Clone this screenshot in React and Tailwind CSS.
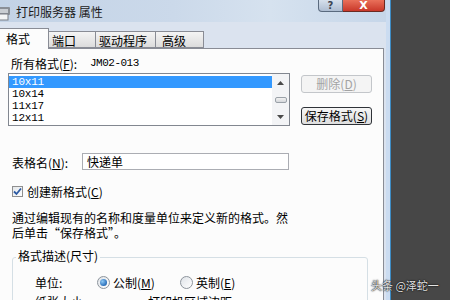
import React from "react";

const cjk = "font-['Noto_Sans_CJK_SC','Noto_Sans_CJK_JP',sans-serif]";

function Key({ k }) {
  return (
    <>
      (<span className="underline">{k}</span>)
    </>
  );
}

function Radio({ checked }) {
  return (
    <span className="w-[13px] h-[13px] rounded-full border border-[#8d949c] bg-[linear-gradient(135deg,#dfe3e8,#ffffff)] flex items-center justify-center shrink-0">
      {checked && (
        <span className="w-[7px] h-[7px] rounded-full bg-[radial-gradient(circle_at_35%_35%,#8cc8f5,#2a6fba_70%,#1d4f92)]" />
      )}
    </span>
  );
}

function ScrollBar() {
  return (
    <div className="w-[17px] h-full bg-[#f3f4f6] flex flex-col items-center">
      <div className="h-[17px] flex items-center justify-center">
        <svg width="7" height="4" viewBox="0 0 7 4">
          <path d="M0 4 L3.5 0 L7 4 Z" fill="#4a4a4a" />
        </svg>
      </div>
      <div className="flex-1 flex items-center justify-center">
        <div className="w-[12px] h-[6px] rounded-[2px] border border-[#9aa1a8] bg-[linear-gradient(#f2f2f2,#d4d7db)]" />
      </div>
      <div className="h-[17px] flex items-center justify-center">
        <svg width="7" height="4" viewBox="0 0 7 4">
          <path d="M0 0 L3.5 4 L7 0 Z" fill="#4a4a4a" />
        </svg>
      </div>
    </div>
  );
}

export default function App() {
  const sizes = ["10x11", "10x14", "11x17", "12x11"];

  return (
    <div lang="zh-CN" className={`relative w-[450px] h-[300px] overflow-hidden flex bg-[#474747] text-[12px] text-black ${cjk}`}>
      <div className="w-[391px] h-full flex shrink-0">
        <div className="w-[386px] h-full flex flex-col">
          {/* title bar */}
          <div className="h-[22px] flex items-start shrink-0 bg-[linear-gradient(90deg,#c3d3e6_0%,#cbd9ea_45%,#d6e2ef_70%,#c6d6e9_100%)]">
            <svg width="12" height="20" viewBox="0 0 12 20" className="mt-[3px]">
              <rect x="-4" y="4" width="14" height="8" rx="1" fill="#8a8f96" />
              <rect x="-4" y="6" width="12" height="4" fill="#c9cdd2" />
              <rect x="-2" y="11" width="10" height="6" fill="#f4f5f6" stroke="#7a7f86" strokeWidth="1" />
            </svg>
            <div className="ml-[4px] leading-[22px] pt-[1px] text-[#1b1b1b] whitespace-pre">打印服务器 属性</div>
            <div className="ml-auto mr-[1px] flex">
              <div className="w-[25px] h-[12px] border border-t-0 border-[#5a6a7e] rounded-bl-[4px] bg-[linear-gradient(#d6e0ec,#aebdd1)] flex items-center justify-center">
                <span className="font-['DejaVu_Sans',sans-serif] text-[10px] font-bold leading-none text-[#3b4452]">?</span>
              </div>
              <div className="w-[42px] h-[12px] border border-t-0 border-l-0 border-[#6b2a22] rounded-br-[4px] bg-[linear-gradient(#e9705a,#c9382a)] flex items-center justify-center">
                <span className="font-['DejaVu_Sans',sans-serif] text-[11px] font-bold leading-none text-white">X</span>
              </div>
            </div>
          </div>

          {/* client area */}
          <div className="flex-1 flex flex-col bg-[#dbe3ef]">
            {/* tabs */}
            <div className="h-[26px] flex items-end shrink-0 relative z-10">
              <div className="-ml-px w-[50px] h-[21px] -mb-px bg-[#fcfcfc] border border-b-0 border-[#898c95] pl-[6px] leading-[20px]">
                格式
              </div>
              <div className="w-[47px] h-[17px] border border-l-0 border-[#898c95] bg-[linear-gradient(#f4f4f4,#dcdcdc)] pl-[3px] leading-[17px]">
                端口
              </div>
              <div className="w-[60px] h-[17px] border border-l-0 border-[#898c95] bg-[linear-gradient(#f4f4f4,#dcdcdc)] pl-[3px] leading-[17px]">
                驱动程序
              </div>
              <div className="w-[48px] h-[17px] border border-l-0 border-[#898c95] bg-[linear-gradient(#f4f4f4,#dcdcdc)] pl-[6px] leading-[17px]">
                高级
              </div>
            </div>

            {/* panel */}
            <div className="flex-1 -ml-px mr-[2px] bg-[#fcfcfc] border-t border-r border-[#898c95] pl-px">
              <div className="mt-[8px] pl-[11px] leading-[13px] flex items-center">
                <span className="w-[79px]">
                  所有格式<Key k="F" />:
                </span>
                <span className="font-['Liberation_Mono',monospace] text-[11px] tracking-[-0.5px]">JM02-013</span>
              </div>

              <div className="mt-[3px] flex items-start">
                <div className="ml-[8px] w-[282px] h-[53px] border border-[#828790] bg-white flex">
                  <div className="flex-1 pt-[2px] font-['Liberation_Mono',monospace] text-[11px] tracking-[-0.2px]">
                    {sizes.map((s, i) => (
                      <div
                        key={s}
                        className={`h-[12px] leading-[12px] pl-[3px] ${i === 0 ? "bg-[#3399ff] text-white" : ""}`}
                      >
                        {s}
                      </div>
                    ))}
                  </div>
                  <ScrollBar />
                </div>
                <div className="ml-[11px] mt-[2px] flex flex-col gap-[14px]">
                  <div className="w-[71px] h-[18px] rounded-[3px] border border-[#c3c6ca] bg-[#f4f4f4] text-[#a3a3a3] flex items-center justify-center leading-none">
                    删除<Key k="D" />
                  </div>
                  <div className="w-[71px] h-[18px] rounded-[3px] border border-[#2f3338] bg-[linear-gradient(#f6f6f6,#dedede)] flex items-center justify-center leading-none">
                    保存格式<Key k="S" />
                  </div>
                </div>
              </div>

              <div className="mt-[25px] pl-[12px] flex items-center">
                <span className="w-[70px] pt-[3px]">
                  表格名<Key k="N" />:
                </span>
                <div className="w-[207px] h-[17px] border border-[#abadb3] bg-white pl-[4px] leading-[15px]">快递单</div>
              </div>

              <div className="mt-[13px] pl-[12px] flex items-center h-[13px]">
                <span className="w-[11px] h-[11px] border border-[#8f8f8f] bg-[linear-gradient(135deg,#e4e7ea,#ffffff)] flex items-center justify-center">
                  <svg width="9" height="9" viewBox="0 0 9 9">
                    <path d="M1 4.5 L3.5 7 L8 1.5" fill="none" stroke="#2c5aa3" strokeWidth="1.8" />
                  </svg>
                </span>
                <span className="ml-[4px]">
                  创建新格式<Key k="C" />
                </span>
              </div>

              <p className="mt-[12px] pl-[12px] leading-[15px] whitespace-nowrap">
                通过编辑现有的名称和度量单位来定义新的格式。然
                <br />
                后单击“保存格式”。
              </p>

              <fieldset className="mt-[9px] ml-[12px] w-[356px] h-[120px] border border-[#d5dfe5] rounded-[3px]">
                <legend className="ml-[3px] px-[2px] pb-[4px] leading-[13px]">格式描述(尺寸)</legend>
                <div className="mt-[10px] pl-[22px] flex items-center h-[13px]">
                  <span className="w-[62px]">单位:</span>
                  <span className="w-[83px] flex items-center">
                    <Radio checked />
                    <span className="ml-[3px]">
                      公制<Key k="M" />
                    </span>
                  </span>
                  <span className="flex items-center">
                    <Radio />
                    <span className="ml-[3px]">
                      英制<Key k="E" />
                    </span>
                  </span>
                </div>
                <div className="mt-[6px] pl-[22px] flex h-[13px] leading-[13px]">
                  <span className="w-[113px]">纸张大小:</span>
                  <span>打印机区域边距:</span>
                </div>
              </fieldset>
            </div>
          </div>
        </div>
        {/* window frame */}
        <div className="w-[5px] h-full bg-[#cbdcf1] border-r border-[#3e8cc4]" />
      </div>

      <div className="absolute left-[371px] top-[278px] text-[11px] leading-[14px] text-[#e4e4e4] [text-shadow:0_0_2px_#000,0_0_1px_#000] whitespace-nowrap">
        头条 @泽蛇一
      </div>
    </div>
  );
}
